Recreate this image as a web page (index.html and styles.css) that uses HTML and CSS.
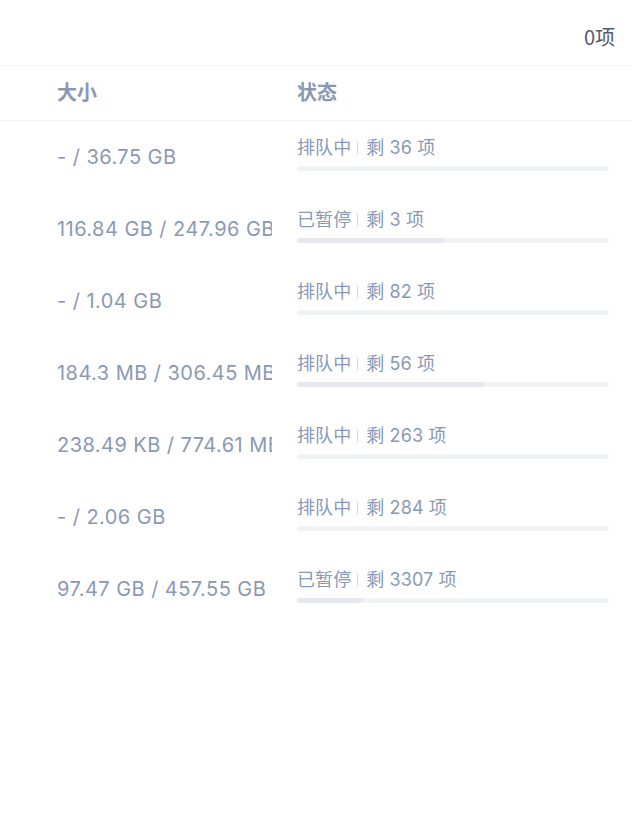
FILE: index.html
```html
<!DOCTYPE html>
<html lang="zh-CN">
<head>
    <meta charset="UTF-8">
    <title>任务列表</title>
    <link rel="stylesheet" href="styles.css">
</head>
<body>
<div id="toolbar">
    <span class="count">0项</span>
</div>
<div id="list">
    <div class="row head">
        <div class="size">大小</div>
        <div class="status">状态</div>
    </div>
    <div class="row">
        <div class="size">- / 36.75 GB</div>
        <div class="status">
            <div class="state">排队中<i class="sep"></i>剩 36 项</div>
            <div class="bar"><div class="fill" style="width: 0%"></div></div>
        </div>
    </div>
    <div class="row">
        <div class="size">116.84 GB / 247.96 GB</div>
        <div class="status">
            <div class="state">已暂停<i class="sep"></i>剩 3 项</div>
            <div class="bar"><div class="fill" style="width: 47%"></div></div>
        </div>
    </div>
    <div class="row">
        <div class="size">- / 1.04 GB</div>
        <div class="status">
            <div class="state">排队中<i class="sep"></i>剩 82 项</div>
            <div class="bar"><div class="fill" style="width: 0%"></div></div>
        </div>
    </div>
    <div class="row">
        <div class="size">184.3 MB / 306.45 MB</div>
        <div class="status">
            <div class="state">排队中<i class="sep"></i>剩 56 项</div>
            <div class="bar"><div class="fill" style="width: 60%"></div></div>
        </div>
    </div>
    <div class="row">
        <div class="size">238.49 KB / 774.61 MB</div>
        <div class="status">
            <div class="state">排队中<i class="sep"></i>剩 263 项</div>
            <div class="bar"><div class="fill" style="width: 0%"></div></div>
        </div>
    </div>
    <div class="row">
        <div class="size">- / 2.06 GB</div>
        <div class="status">
            <div class="state">排队中<i class="sep"></i>剩 284 项</div>
            <div class="bar"><div class="fill" style="width: 0%"></div></div>
        </div>
    </div>
    <div class="row">
        <div class="size">97.47 GB / 457.55 GB</div>
        <div class="status">
            <div class="state">已暂停<i class="sep"></i>剩 3307 项</div>
            <div class="bar"><div class="fill" style="width: 21%"></div></div>
        </div>
    </div>
</div>
</body>
</html>
```

FILE: styles.css
```css
* {
    padding: 0;
    margin: 0;
    box-sizing: border-box;
}

body {
    background: #ffffff;
    font-family: Inter, "Noto Sans CJK SC", sans-serif;
    color: #8a99b3;
}

#toolbar {
    height: 66px;
    display: flex;
    align-items: center;
    justify-content: flex-end;
    padding-right: 17px;
    border-bottom: 1px solid #f1f2f4;
}

#toolbar .count {
    font-family: "Noto Sans CJK SC", sans-serif;
    font-size: 20px;
    color: #555b69;
    margin-top: 8px;
}

#list .row {
    display: grid;
    grid-template-columns: 216px 1fr;
    column-gap: 24px;
    padding: 0 23px 0 57px;
    height: 72px;
}

#list .head {
    height: 55px;
    align-items: center;
    padding-bottom: 3px;
    border-bottom: 1px solid #f1f2f4;
    font-family: "Noto Sans CJK SC", sans-serif;
    font-weight: bold;
    font-size: 20px;
}

.row .size {
    font-size: 20px;
    letter-spacing: 0.45px;
    white-space: nowrap;
    overflow: hidden;
    align-self: center;
    width: 215px;
}

.head .size {
    overflow: visible;
    letter-spacing: 0;
}

.row .status {
    padding-top: 15px;
}

.head .status {
    padding-top: 0;
}

.state {
    font-size: 18px;
    line-height: 24px;
    letter-spacing: 0.1px;
    white-space: nowrap;
    display: flex;
    align-items: center;
}

.state .sep {
    display: inline-block;
    width: 1px;
    height: 12px;
    background: #d6dbe3;
    margin: 0 8px 0 6px;
}

.bar {
    height: 5px;
    margin-top: 6px;
    border-radius: 3px;
    background: #f2f3f5;
    overflow: hidden;
}

.bar .fill {
    height: 100%;
    border-radius: 3px;
    background: #e6e8ed;
}
```
